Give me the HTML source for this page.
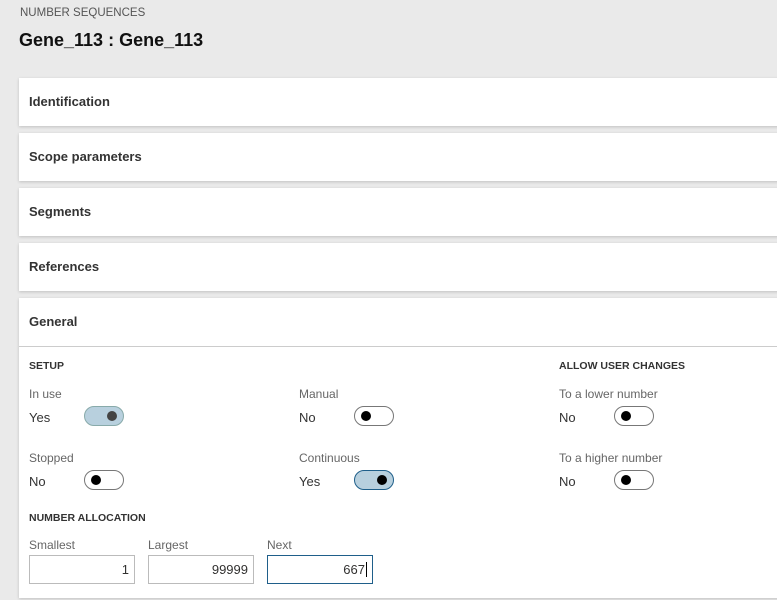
<!DOCTYPE html>
<html><head><style>
body{margin:0;width:777px;height:600px;background:#eaeaea;font-family:"Liberation Sans",sans-serif;position:relative;overflow:hidden;color:#323130}
.a{position:absolute}
.card{position:absolute;left:19px;width:770px;background:#fff;box-shadow:0 1px 3px rgba(0,0,0,.18)}
.h{position:absolute;left:10px;font-size:13px;font-weight:bold;color:#333}
.lbl{position:absolute;font-size:12px;color:#666}
.val{position:absolute;font-size:13px;color:#333}
.sec{position:absolute;font-size:10.5px;font-weight:bold;color:#333}
.tg{position:absolute;width:38px;height:18px;border:1px solid #777;border-radius:11px;background:#fff}
.tg i{position:absolute;top:4px;left:6px;width:10px;height:10px;border-radius:50%;background:#000}
.tg.on{background:#b8d0de;border-color:#8aa}
.tg.on i{left:auto;right:6px;background:#444}
.tg.on2{background:#b8d0de;border-color:#1f5f8a}
.tg.on2 i{left:auto;right:6px;background:#000}
.tb{position:absolute;top:555px;width:99px;height:27px;border:1px solid #bbb;background:#fff;font-size:13px;text-align:right;line-height:28px;padding-right:5px;box-sizing:content-box}
</style></head><body>
<div class="a" style="left:20px;top:7px;font-size:11.5px;color:#555">NUMBER SEQUENCES</div>
<div class="a" style="left:19px;top:30px;font-size:18px;font-weight:bold;color:#111">Gene_113 : Gene_113</div>
<div class="card" style="top:78px;height:48px"><div class="h" style="top:16px">Identification</div></div>
<div class="card" style="top:133px;height:48px"><div class="h" style="top:16px">Scope parameters</div></div>
<div class="card" style="top:188px;height:48px"><div class="h" style="top:16px">Segments</div></div>
<div class="card" style="top:243px;height:48px"><div class="h" style="top:16px">References</div></div>
<div class="card" style="top:298px;height:300px"><div class="h" style="top:16px">General</div>
<div class="a" style="left:0;top:48px;width:770px;height:1px;background:#ccc"></div></div>
<div class="sec" style="left:29px;top:360px">SETUP</div>
<div class="sec" style="left:559px;top:360px">ALLOW USER CHANGES</div>
<div class="lbl" style="left:29px;top:387px">In use</div><div class="val" style="left:29px;top:410px">Yes</div><div class="tg on" style="left:84px;top:406px"><i></i></div>
<div class="lbl" style="left:299px;top:387px">Manual</div><div class="val" style="left:299px;top:410px">No</div><div class="tg" style="left:354px;top:406px"><i></i></div>
<div class="lbl" style="left:559px;top:387px">To a lower number</div><div class="val" style="left:559px;top:410px">No</div><div class="tg" style="left:614px;top:406px"><i></i></div>
<div class="lbl" style="left:29px;top:451px">Stopped</div><div class="val" style="left:29px;top:474px">No</div><div class="tg" style="left:84px;top:470px"><i></i></div>
<div class="lbl" style="left:299px;top:451px">Continuous</div><div class="val" style="left:299px;top:474px">Yes</div><div class="tg on2" style="left:354px;top:470px"><i></i></div>
<div class="lbl" style="left:559px;top:451px">To a higher number</div><div class="val" style="left:559px;top:474px">No</div><div class="tg" style="left:614px;top:470px"><i></i></div>
<div class="sec" style="left:29px;top:512px">NUMBER ALLOCATION</div>
<div class="lbl" style="left:29px;top:538px">Smallest</div><div class="lbl" style="left:148px;top:538px">Largest</div><div class="lbl" style="left:267px;top:538px">Next</div>
<div class="tb" style="left:29px">1</div>
<div class="tb" style="left:148px">99999</div>
<div class="tb" style="left:267px;border-color:#1f5f8a">667<span style="border-left:1px solid #000;margin-left:1px"></span></div>
</body></html>
